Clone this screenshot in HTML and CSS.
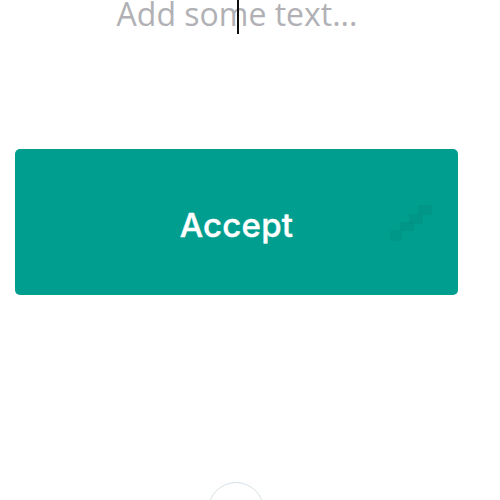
FILE: index.html
```html
<!DOCTYPE html>
<html lang="en">
<head>
    <meta charset="UTF-8">
    <title>Accept</title>
    <link rel="stylesheet" href="styles.css">
</head>
<body>
    <div class="editor">
        <span class="placeholder">Add som<span class="caret"></span>e text...</span>
    </div>

    <div class="actions">
        <button class="accept-btn" type="button">
            Accept
            <svg class="grip" width="42" height="36" viewBox="0 0 42 36">
                <rect x="28" y="0" width="14" height="10" fill="#000" opacity="0.04"/>
                <rect x="19" y="9" width="14" height="10" fill="#000" opacity="0.04"/>
                <rect x="10" y="17" width="14" height="9" fill="#000" opacity="0.04"/>
                <rect x="0" y="25" width="12" height="11" fill="#000" opacity="0.035"/>
            </svg>
        </button>
    </div>

    <div class="footer">
        <div class="ring"></div>
    </div>
</body>
</html>
```

FILE: styles.css
```css
body {
    margin: 0;
    background-color: #fff;
    font-family: "Open Sans", sans-serif;
    width: 500px;
    height: 500px;
    overflow: hidden;
}

.editor {
    height: 40px;
    margin-top: -8px;
    text-align: center;
    padding-right: 26px;
}

.placeholder {
    font-size: 32px;
    color: #b1b1b5;
    position: relative;
}

.caret {
    position: absolute;
    top: 8px;
    width: 1.5px;
    height: 34px;
    margin-left: -11px;
    background-color: #111;
}

.actions {
    padding: 117px 42px 0 15px;
}

.accept-btn {
    position: relative;
    display: block;
    width: 100%;
    height: 146px;
    border: none;
    border-radius: 5px;
    background-color: #009e8f;
    color: #fff;
    font-family: Inter, sans-serif;
    font-size: 33px;
    font-weight: 500;
    letter-spacing: 0.2px;
    -webkit-text-stroke: 0.4px #fff;
    padding: 6px 0 0;
}

.grip {
    position: absolute;
    left: 375px;
    top: 56px;
}

.footer {
    display: flex;
    justify-content: center;
    padding-top: 187px;
    padding-right: 29px;
    height: 30px;
    overflow: hidden;
}

.ring {
    width: 54px;
    height: 54px;
    border: 1.5px solid #d5e0e6;
    border-radius: 50%;
    flex-shrink: 0;
}
```
